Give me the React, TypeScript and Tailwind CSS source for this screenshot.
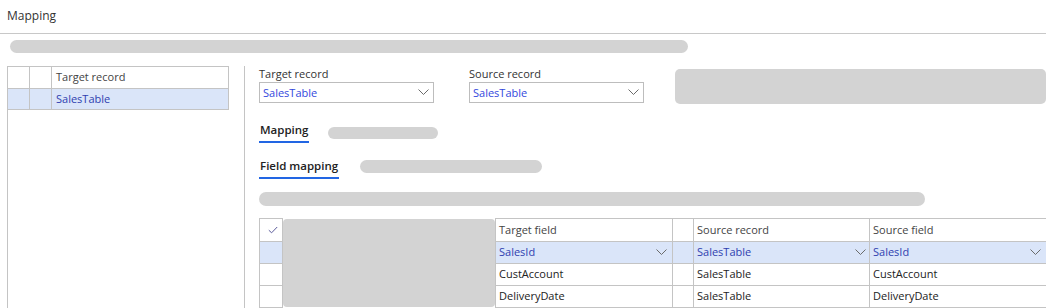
import React from "react";

const Chevron = ({ className = "" }: { className?: string }) => (
  <svg width="11" height="7" viewBox="0 0 11 7" className={className} fill="none">
    <polyline points="0.5,0.5 5.5,5.5 10.5,0.5" stroke="#6b6b6b" strokeWidth="1" />
  </svg>
);

const Check = () => (
  <svg width="10" height="8" viewBox="0 0 10 8" fill="none">
    <polyline points="0.8,4.2 3.6,6.8 9.2,1" stroke="#5a5a9a" strokeWidth="1" />
  </svg>
);

const Dropdown = ({ label }: { label: string }) => (
  <div className="w-[175px]">
    <div className="h-[16px] leading-[16px] text-[11px] text-[#333]">{label}</div>
    <div className="flex h-[21px] items-center justify-between border border-[#bdbdbd] pl-[3px] pr-[4px]">
      <span className="pt-[1px] text-[11px] text-[#3348dd]">SalesTable</span>
      <Chevron />
    </div>
  </div>
);

const cell = "border-l border-t border-[#c4c4c4] flex items-center pl-[3px] text-[11px]";

export default function App() {
  return (
    <div className="h-[308px] w-[1046px] overflow-hidden bg-white font-['Open_Sans',sans-serif] text-[#333]">
      <div className="h-[34px] border-b border-[#c8c8c8] px-[7px] pt-[8px] text-[12px] leading-[16px]">Mapping</div>
      <div className="ml-[10px] mt-[6px] h-[13px] w-[678px] rounded-full bg-[#d3d3d3]" />
      <div className="mt-[13px] flex h-[242px]">
        <div className="ml-[7px] h-full w-[238px] border-l border-r border-[#c4c4c4]">
          <div className="w-[221px] border-t border-[#c4c4c4]">
            <div className="grid h-[22px] grid-cols-[22px_22px_177px] border-b border-[#c4c4c4]">
              <div className="border-r border-[#c4c4c4]" />
              <div className="border-r border-[#c4c4c4]" />
              <div className="flex items-center border-r border-[#c4c4c4] pl-[4px] text-[11px] text-[#444]">Target record</div>
            </div>
            <div className="grid h-[21px] grid-cols-[22px_22px_177px] border-b border-[#c4c4c4] bg-[#dae5f9]">
              <div className="border-r border-[#c4c4c4]" />
              <div className="border-r border-[#c4c4c4]" />
              <div className="flex items-center border-r border-[#c4c4c4] pl-[4px] text-[11px] text-[#2f3fb0]">SalesTable</div>
            </div>
          </div>
        </div>
        <div className="ml-[14px] flex flex-1 flex-col">
          <div className="flex items-start">
            <Dropdown label="Target record" />
            <div className="ml-[35px]">
              <Dropdown label="Source record" />
            </div>
            <div className="ml-[31px] mt-[3px] h-[35px] w-[371px] rounded-[5px] bg-[#d3d3d3]" />
          </div>
          <div className="mt-[18px] flex items-center">
            <div className="border-b-2 border-[#2266e3] px-[1px] pb-[3px] text-[11.5px] font-semibold leading-[16px] text-[#222]">Mapping</div>
            <div className="ml-[19px] h-[12px] w-[110px] rounded-full bg-[#d3d3d3]" />
          </div>
          <div className="mt-[15px] flex items-start">
            <div className="border-b-2 border-[#2266e3] px-[1px] pb-[3px] text-[11.5px] font-semibold leading-[16px] text-[#222]">Field mapping</div>
            <div className="ml-[21px] mt-[2px] h-[13px] w-[182px] rounded-full bg-[#d3d3d3]" />
          </div>
          <div className="mt-[13px] h-[14px] w-[666px] rounded-full bg-[#d3d3d3]" />
          <div className="mt-[12px] grid grid-cols-[23px_213px_177px_21px_176px_177px] grid-rows-[23px_22px_22px_23px]">
            <div className={cell + " justify-center pl-0"}><Check /></div>
            <div className="row-span-4 border-l border-[#c4c4c4] py-[1px]">
              <div className="h-full w-full rounded-[4px] bg-[#d3d3d3]" />
            </div>
            <div className={cell + " text-[#444]"}>Target field</div>
            <div className={cell} />
            <div className={cell + " text-[#444]"}>Source record</div>
            <div className={cell + " text-[#444]"}>Source field</div>

            <div className={cell + " bg-[#dae5f9]"} />
            <div className={cell + " justify-between bg-[#dae5f9] pr-[5px] text-[#2f3fb0]"}><span>SalesId</span><Chevron /></div>
            <div className={cell + " bg-[#dae5f9]"} />
            <div className={cell + " justify-between bg-[#dae5f9] pr-[3px] text-[#2f3fb0]"}><span>SalesTable</span><Chevron /></div>
            <div className={cell + " justify-between bg-[#dae5f9] pr-[5px] text-[#2f3fb0]"}><span>SalesId</span><Chevron /></div>

            <div className={cell} />
            <div className={cell + " text-[#222]"}>CustAccount</div>
            <div className={cell} />
            <div className={cell + " text-[#222]"}>SalesTable</div>
            <div className={cell + " text-[#222]"}>CustAccount</div>

            <div className={cell + " border-b"} />
            <div className={cell + " border-b text-[#222]"}>DeliveryDate</div>
            <div className={cell + " border-b"} />
            <div className={cell + " border-b text-[#222]"}>SalesTable</div>
            <div className={cell + " border-b text-[#222]"}>DeliveryDate</div>
          </div>
        </div>
      </div>
    </div>
  );
}
